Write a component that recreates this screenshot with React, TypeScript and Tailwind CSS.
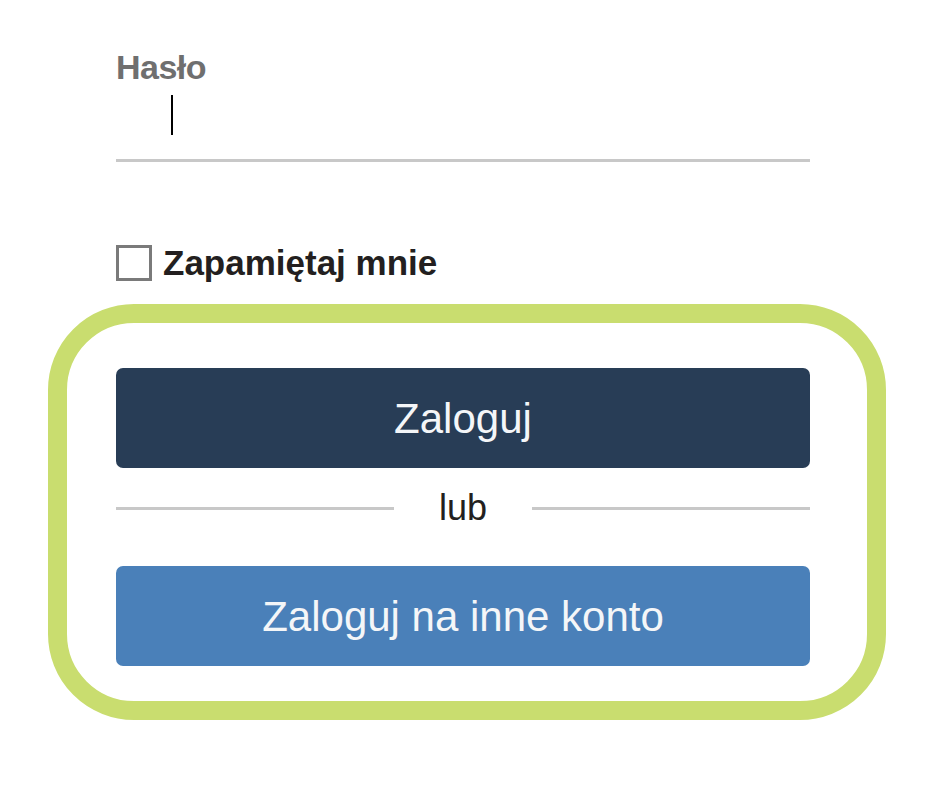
export default function App() {
  return (
    <div className="w-[940px] h-[788px] bg-white font-['Liberation_Sans',Arial,sans-serif]">
      <div className="w-[810px] pl-[116px] pt-[47px]">
        <label className="block h-[40px] leading-[40px] text-[34px] font-bold text-[#6f6f6f] tracking-[-0.5px]">Hasło</label>
        <div className="h-[72px] pt-[8px]">
          <div className="ml-[55px] w-[2px] h-[40px] bg-black" />
        </div>
        <div className="h-[3px] bg-[#c8c8c8]" />
        <div className="mt-[83px] flex items-center">
          <span className="w-[36px] h-[36px] border-[3px] border-[#7a7a7a] bg-white" />
          <span className="ml-[11px] text-[35px] leading-[36px] font-bold text-[#231f20]">Zapamiętaj mnie</span>
        </div>
      </div>

      <div className="mt-[23px] ml-[48px] w-[838px] border-[19px] border-[#c9dd6f] rounded-[86px] pl-[49px] pr-[57px] pt-[45px] pb-[35px]">
        <button className="w-full h-[100px] rounded-[7px] bg-[#283d56] text-[#f4f6f8] text-[42px] flex items-center justify-center">
          Zaloguj
        </button>
        <div className="mt-[22px] h-[36px] flex items-center">
          <div className="flex-1 h-[3px] bg-[#c8c8c8]" />
          <span className="px-[45px] text-[36px] leading-[36px] text-[#231f20]">lub</span>
          <div className="flex-1 h-[3px] bg-[#c8c8c8]" />
        </div>
        <button className="mt-[40px] w-full h-[100px] rounded-[7px] bg-[#4a80b9] text-[#f4f6f8] text-[42px] flex items-center justify-center">
          Zaloguj na inne konto
        </button>
      </div>
    </div>
  );
}
